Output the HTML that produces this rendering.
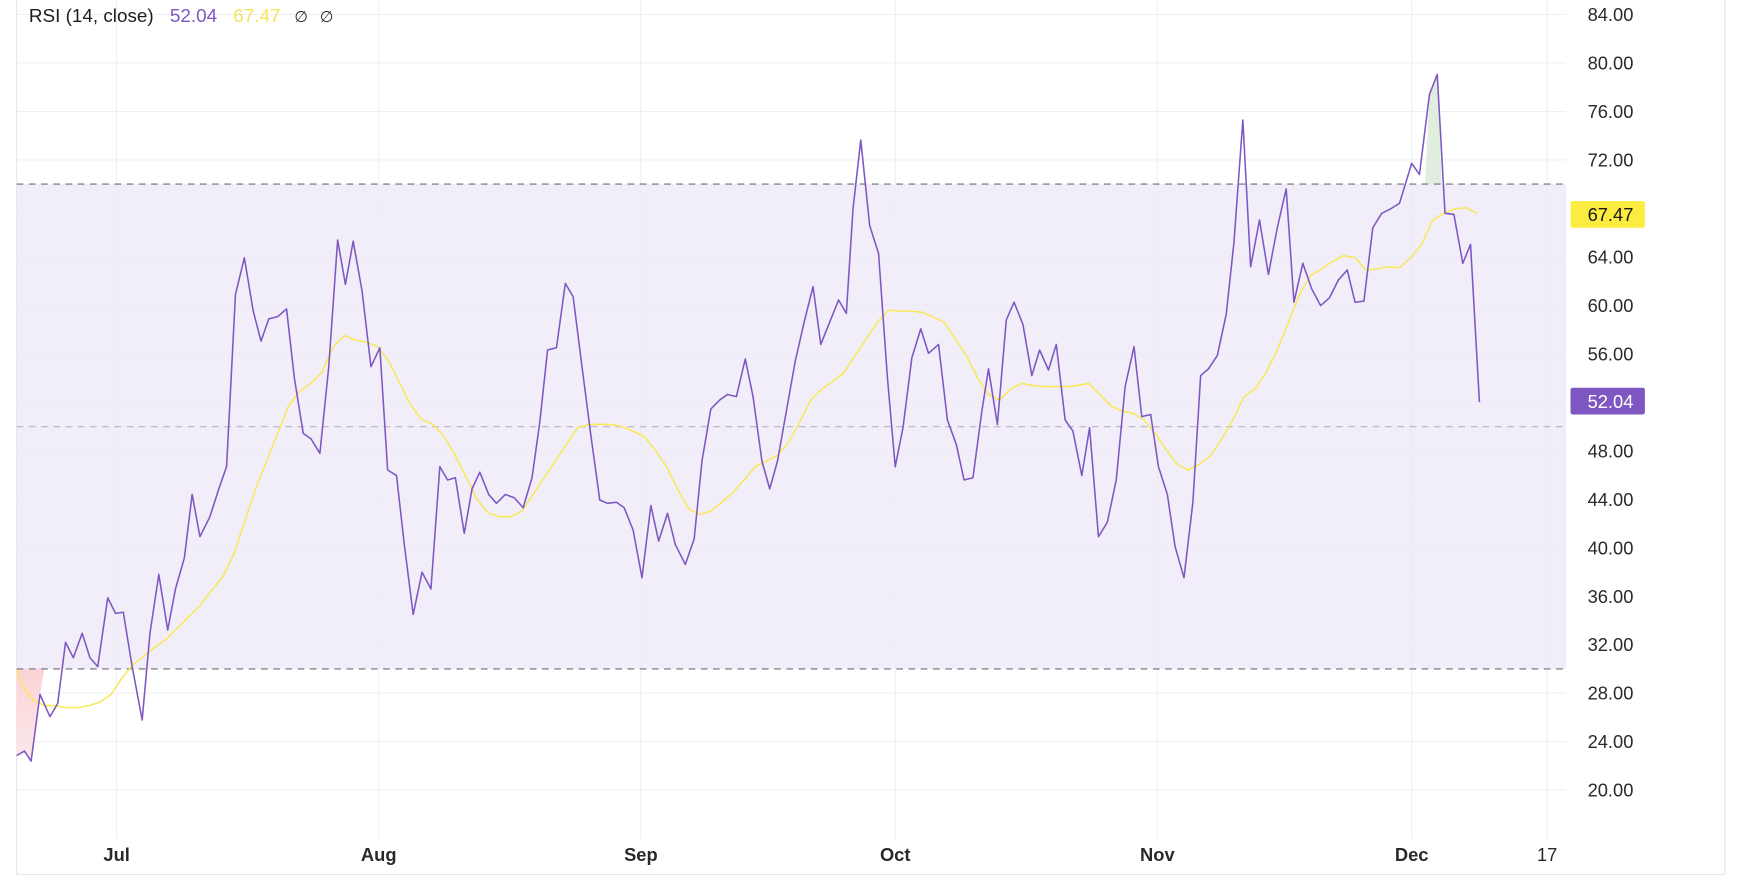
<!DOCTYPE html>
<html><head><meta charset="utf-8"><style>
html,body{margin:0;padding:0;background:#fff;width:1741px;height:890px;overflow:hidden}
svg{display:block}
text{font-family:"Liberation Sans",sans-serif}
</style></head><body>
<svg width="1741" height="890" viewBox="0 0 1567.5 801" preserveAspectRatio="none">
<defs>
<linearGradient id="rg" x1="0" y1="0" x2="0" y2="1"><stop offset="0" stop-color="#fbd3d6"/><stop offset="1" stop-color="#fde9ea"/></linearGradient>
</defs>
<rect x="15" y="165.7" width="1395" height="436.3" fill="#f1edf9"/>
<g stroke="#ececf2" stroke-width="0.8">
<line x1="15" x2="1410" y1="13" y2="13"/><line x1="15" x2="1410" y1="56.6" y2="56.6"/><line x1="15" x2="1410" y1="100.3" y2="100.3"/><line x1="15" x2="1410" y1="143.9" y2="143.9"/><line x1="15" x2="1410" y1="187.5" y2="187.5"/><line x1="15" x2="1410" y1="231.1" y2="231.1"/><line x1="15" x2="1410" y1="274.8" y2="274.8"/><line x1="15" x2="1410" y1="318.4" y2="318.4"/><line x1="15" x2="1410" y1="362" y2="362"/><line x1="15" x2="1410" y1="405.6" y2="405.6"/><line x1="15" x2="1410" y1="449.2" y2="449.2"/><line x1="15" x2="1410" y1="492.9" y2="492.9"/><line x1="15" x2="1410" y1="536.5" y2="536.5"/><line x1="15" x2="1410" y1="580.1" y2="580.1"/><line x1="15" x2="1410" y1="623.7" y2="623.7"/><line x1="15" x2="1410" y1="667.4" y2="667.4"/><line x1="15" x2="1410" y1="711" y2="711"/>
<line x1="105" x2="105" y1="0" y2="755"/><line x1="341" x2="341" y1="0" y2="755"/><line x1="577" x2="577" y1="0" y2="755"/><line x1="806" x2="806" y1="0" y2="755"/><line x1="1042" x2="1042" y1="0" y2="755"/><line x1="1271" x2="1271" y1="0" y2="755"/><line x1="1393" x2="1393" y1="0" y2="755"/>
</g>
<line x1="15" x2="15" y1="0" y2="787" stroke="#e6e6ea" stroke-width="1"/>
<line x1="1553" x2="1553" y1="0" y2="787" stroke="#e6e6ea" stroke-width="1"/>
<line x1="15" x2="1553" y1="787" y2="787" stroke="#e6e6ea" stroke-width="1"/>
<polygon points="15,602 15,680 22,676 28,685 36,625 40,602" fill="url(#rg)"/>
<polygon points="1283,165.7 1287,85 1294,67 1298,165.7" fill="#dfeedd"/>
<g stroke="#6e6b7a" stroke-width="1" stroke-dasharray="6,5">
<line x1="15" x2="1410" y1="165.7" y2="165.7"/><line x1="15" x2="1410" y1="602" y2="602"/>
</g>
<line x1="15" x2="1410" y1="384" y2="384" stroke="#b8b3c8" stroke-width="1" stroke-dasharray="6,5"/>
<polyline fill="none" stroke="#f8e95a" stroke-width="1.4" points="15,603 22,620 30,630 40,635 50,635 60,637 70,637 80,635 90,632 100,625 110,610 120,598 130,590 140,582 150,575 160,565 170,555 180,545 190,532 200,520 210,500 220,470 230,440 240,415 250,390 260,365 270,352 280,345 290,335 300,312 310,302 320,306 330,308 340,312 350,325 360,345 370,365 380,378 390,382 400,393 410,410 420,430 430,450 440,462 450,465 460,465 470,460 480,445 490,430 500,415 510,400 520,385 530,382 540,382 550,382 560,384 570,388 580,393 590,405 600,420 610,440 620,458 630,463 640,460 650,452 660,443 670,432 680,420 690,415 700,410 710,398 720,380 730,360 740,350 750,343 760,335 770,320 780,305 790,290 800,279 810,280 820,280 830,281 840,285 850,290 860,305 870,320 880,340 890,355 900,360 910,350 920,345 930,347 940,348 950,348 960,348 970,347 980,345 990,355 1000,365 1010,370 1020,372 1030,378 1040,390 1050,405 1060,418 1070,423 1080,418 1090,410 1100,395 1110,378 1120,357 1130,350 1140,335 1150,315 1160,290 1170,265 1180,248 1190,242 1200,235 1210,230 1220,232 1230,243 1240,242 1250,240 1260,241 1270,232 1280,220 1290,198 1300,192 1310,188 1320,187 1330,192"/>
<polyline fill="none" stroke="#7e57c2" stroke-width="1.4" stroke-linejoin="round" points="15,680 22,676 28,685 36,625 45,645 52,633 59,578 66,592 74,570 81,592 88,600 97,538 104,552 111,551 119,600 128,648 135,570 143,517 151,567 158,530 166,502 173,445 180,483 189,465 197,440 204,420 212,265 220,232 228,280 235,307 242,287 250,285 258,278 265,340 273,390 280,395 288,408 296,330 304,216 311,256 318,217 326,262 334,330 342,313 349,423 357,428 364,490 372,553 380,515 388,530 396,420 403,432 410,430 418,480 425,440 432,425 440,445 447,453 455,445 463,448 471,457 479,430 486,380 493,315 501,313 509,255 516,267 524,330 532,392 540,450 547,453 555,452 562,457 570,477 578,520 586,455 593,487 601,462 608,490 617,508 625,485 632,415 640,368 648,360 655,355 663,357 671,323 678,357 686,415 693,440 700,415 708,370 716,325 724,290 732,258 739,310 747,290 755,270 762,282 768,188 775,126 783,203 791,228 799,340 806,420 813,385 821,322 829,296 836,318 845,310 853,378 861,400 868,432 876,430 884,370 890,332 898,382 906,288 913,272 921,292 929,338 936,315 944,333 951,310 959,378 966,388 974,428 981,385 989,483 997,470 1005,432 1013,348 1021,312 1028,375 1036,373 1043,420 1051,445 1058,492 1066,520 1074,452 1081,338 1088,332 1096,320 1104,283 1111,218 1119,108 1126,240 1134,198 1142,247 1150,205 1158,170 1165,272 1173,237 1181,260 1189,275 1197,268 1205,252 1213,243 1220,272 1228,271 1236,205 1244,192 1252,188 1260,183 1264,170 1271,147 1278,157 1287,85 1294,67 1301,192 1309,193 1317,237 1324,220 1332,362"/>
<g fill="#2a2a2e" font-size="16.5" text-anchor="middle">
<text x="1450" y="19">84.00</text><text x="1450" y="62.6">80.00</text><text x="1450" y="106.3">76.00</text><text x="1450" y="149.9">72.00</text><text x="1450" y="237.1">64.00</text><text x="1450" y="280.8">60.00</text><text x="1450" y="324.4">56.00</text><text x="1450" y="411.6">48.00</text><text x="1450" y="455.2">44.00</text><text x="1450" y="498.9">40.00</text><text x="1450" y="542.5">36.00</text><text x="1450" y="586.1">32.00</text><text x="1450" y="629.7">28.00</text><text x="1450" y="673.4">24.00</text><text x="1450" y="717">20.00</text>
</g>
<rect x="1414" y="181" width="67" height="24" rx="2" fill="#fbec3f"/>
<text x="1450" y="199" font-size="16.5" text-anchor="middle" fill="#1a1a1a">67.47</text>
<rect x="1414" y="349" width="67" height="24" rx="2" fill="#7e57c2"/>
<text x="1450" y="367" font-size="16.5" text-anchor="middle" fill="#fff">52.04</text>
<g fill="#2a2a2e" font-size="16.5" text-anchor="middle" font-weight="bold">
<text x="105" y="775">Jul</text><text x="341" y="775">Aug</text><text x="577" y="775">Sep</text><text x="806" y="775">Oct</text><text x="1042" y="775">Nov</text><text x="1271" y="775">Dec</text>
</g>
<text x="1393" y="775" font-size="16.5" text-anchor="middle" fill="#2a2a2e">17</text>
<text x="26" y="20" font-size="17" fill="#1e1e22">RSI (14, close)</text>
<text x="153" y="20" font-size="17" fill="#7e57c2">52.04</text>
<text x="210" y="20" font-size="17" fill="#f5e45a">67.47</text>
<text x="265" y="20" font-size="14" fill="#1e1e22">∅</text>
<text x="288" y="20" font-size="14" fill="#1e1e22">∅</text>
</svg>
</body></html>
